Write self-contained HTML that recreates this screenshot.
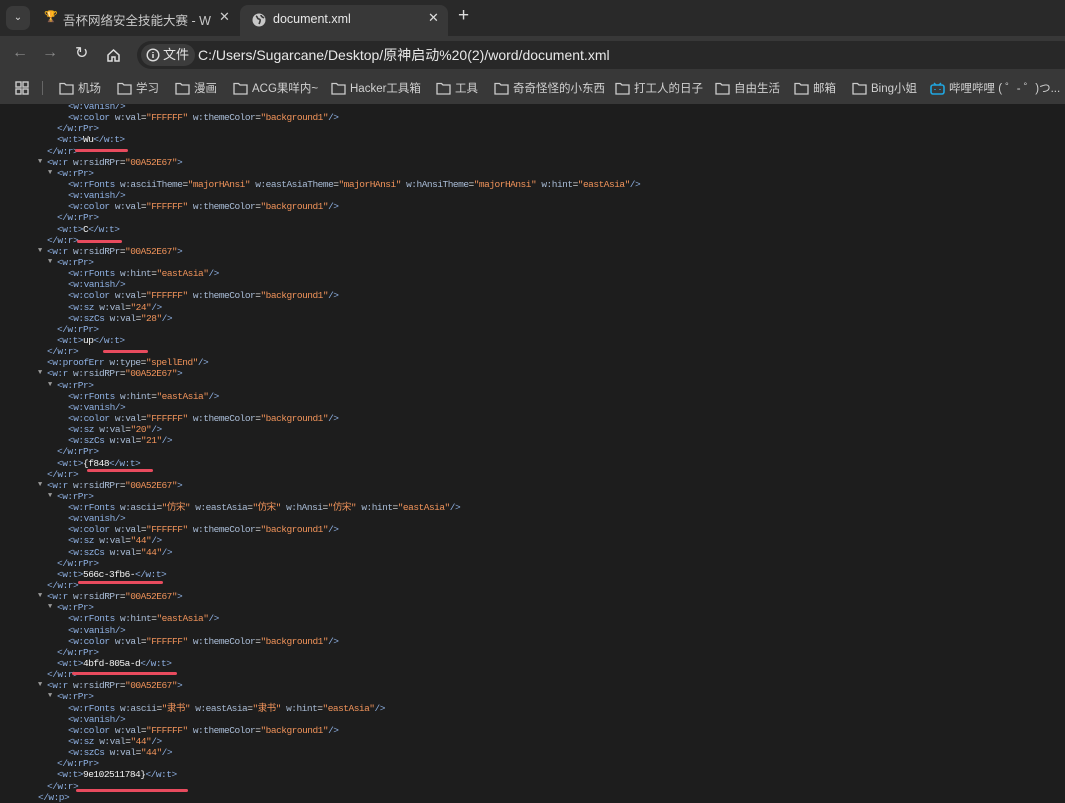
<!DOCTYPE html>
<html><head><meta charset="utf-8"><style>
*{margin:0;padding:0;box-sizing:border-box}
html,body{width:1065px;height:800px;overflow:hidden;background:#1d1d1d;font-family:"Liberation Sans","Noto Sans CJK SC",sans-serif}
.tabbar{position:absolute;left:0;top:0;width:1065px;height:36px;background:#292929;z-index:5}
.tool{position:absolute;left:0;top:36px;width:1065px;height:68px;background:#383838;z-index:5}
.tab{position:absolute;top:5px;height:31px;border-radius:8px 8px 0 0}
.omni{position:absolute;left:137px;top:5px;width:940px;height:28px;background:#282828;border-radius:14px}
.chip{position:absolute;left:4px;top:3px;width:54px;height:22px;background:#3c3c3c;border-radius:11px;color:#e3e3e3;font-size:13px;line-height:22px;padding-left:22px}
.url{position:absolute;left:61px;top:0;line-height:28px;color:#e8e8e8;font-size:14px;white-space:nowrap}
.bm{position:absolute;top:47px;color:#d0d0d0;font-size:11.5px;white-space:nowrap;line-height:12px}
.bm svg{position:absolute;left:-19px;top:-1px}
.code{position:absolute;left:0;top:101px;font-family:"Liberation Mono","Noto Sans CJK SC",monospace;font-size:9.5px;letter-spacing:-0.5px;line-height:11.15px;color:#e8e8e8;z-index:1}
.code div{height:11.15px;position:relative;white-space:pre}
.t{color:#8eb0e2}.n{color:#a9bcd6}.v{color:#f0935a}.x{color:#f4f4f4}
.a{position:absolute;margin-left:-9px;color:#9a9a9a;font-size:7px}
.u{position:absolute;height:3px;background:#e84b5e;border-radius:2px;z-index:2}
</style></head><body>
<div class="tabbar">
 <div style="position:absolute;left:6px;top:6px;width:24px;height:24px;background:#3a3a3a;border-radius:7px;color:#ddd;font-size:10px;text-align:center;line-height:24px">⌄</div>
 <div style="position:absolute;left:44px;top:11px;width:12px;height:12px;color:#e0b040;font-size:11px;line-height:12px">🏆</div>
 <div style="position:absolute;left:63px;top:10px;color:#c8c8c8;font-size:12.5px;white-space:nowrap;width:148px;overflow:hidden">吾杯网络安全技能大赛 - WuCup</div>
 <div style="position:absolute;left:219px;top:9px;color:#ccc;font-size:13px">✕</div>
 <div class="tab" style="left:240px;width:208px;background:#383838">
  <svg style="position:absolute;left:12px;top:8px" width="14" height="14" viewBox="0 0 14 14"><circle cx="7" cy="7" r="6.5" fill="#c8c8c8"/><path d="M4 3c2 1 1 3 3 3s1 3 0 5M9 2c0 2 2 2 3 3" stroke="#383838" stroke-width="1.6" fill="none"/></svg>
  <div style="position:absolute;left:33px;top:7px;color:#e8e8e8;font-size:12.5px">document.xml</div>
  <div style="position:absolute;left:188px;top:5px;color:#ddd;font-size:13px">✕</div>
 </div>
 <div style="position:absolute;left:458px;top:5px;color:#ddd;font-size:19px">+</div>
</div>
<div class="tool">
 <div style="position:absolute;left:12px;top:8px;color:#8a8a8a;font-size:16px">←</div>
 <div style="position:absolute;left:42px;top:8px;color:#8a8a8a;font-size:16px">→</div>
 <div style="position:absolute;left:75px;top:7px;color:#ddd;font-size:16px">↻</div>
 <svg style="position:absolute;left:106px;top:12px" width="15" height="15" viewBox="0 0 15 15"><path d="M2 7L7.5 2L13 7V13H9V9H6V13H2Z" stroke="#ddd" stroke-width="1.5" fill="none"/></svg>
 <div class="omni">
  <div class="chip"><svg style="position:absolute;left:5px;top:4px" width="14" height="14" viewBox="0 0 14 14"><circle cx="7" cy="7" r="5.8" stroke="#ddd" stroke-width="1.4" fill="none"/><path d="M7 6v4M7 4v1" stroke="#ddd" stroke-width="1.5"/></svg>文件</div>
  <div class="url">C:/Users/Sugarcane/Desktop/原神启动%20(2)/word/document.xml</div>
 </div>
 <svg style="position:absolute;left:15px;top:45px" width="14" height="14" viewBox="0 0 14 14"><g stroke="#ccc" stroke-width="1.4" fill="none"><rect x="1" y="1" width="5" height="5"/><rect x="8" y="1" width="5" height="5"/><rect x="1" y="8" width="5" height="5"/><rect x="8" y="8" width="5" height="5"/></g></svg>
 <div style="position:absolute;left:42px;top:45px;width:1px;height:14px;background:#666"></div>
</div>
<div style="position:absolute;left:0;top:36px;z-index:6">
<div class="bm" style="left:78px"><svg width="15" height="13" viewBox="0 0 15 13"><path d="M1 1.5H5.5L7 3H14V12H1Z" stroke="#ccc" stroke-width="1.3" fill="none"/></svg>机场</div>
<div class="bm" style="left:136px"><svg width="15" height="13" viewBox="0 0 15 13"><path d="M1 1.5H5.5L7 3H14V12H1Z" stroke="#ccc" stroke-width="1.3" fill="none"/></svg>学习</div>
<div class="bm" style="left:194px"><svg width="15" height="13" viewBox="0 0 15 13"><path d="M1 1.5H5.5L7 3H14V12H1Z" stroke="#ccc" stroke-width="1.3" fill="none"/></svg>漫画</div>
<div class="bm" style="left:252px"><svg width="15" height="13" viewBox="0 0 15 13"><path d="M1 1.5H5.5L7 3H14V12H1Z" stroke="#ccc" stroke-width="1.3" fill="none"/></svg>ACG果咩内~</div>
<div class="bm" style="left:350px"><svg width="15" height="13" viewBox="0 0 15 13"><path d="M1 1.5H5.5L7 3H14V12H1Z" stroke="#ccc" stroke-width="1.3" fill="none"/></svg>Hacker工具箱</div>
<div class="bm" style="left:455px"><svg width="15" height="13" viewBox="0 0 15 13"><path d="M1 1.5H5.5L7 3H14V12H1Z" stroke="#ccc" stroke-width="1.3" fill="none"/></svg>工具</div>
<div class="bm" style="left:513px"><svg width="15" height="13" viewBox="0 0 15 13"><path d="M1 1.5H5.5L7 3H14V12H1Z" stroke="#ccc" stroke-width="1.3" fill="none"/></svg>奇奇怪怪的小东西</div>
<div class="bm" style="left:634px"><svg width="15" height="13" viewBox="0 0 15 13"><path d="M1 1.5H5.5L7 3H14V12H1Z" stroke="#ccc" stroke-width="1.3" fill="none"/></svg>打工人的日子</div>
<div class="bm" style="left:734px"><svg width="15" height="13" viewBox="0 0 15 13"><path d="M1 1.5H5.5L7 3H14V12H1Z" stroke="#ccc" stroke-width="1.3" fill="none"/></svg>自由生活</div>
<div class="bm" style="left:813px"><svg width="15" height="13" viewBox="0 0 15 13"><path d="M1 1.5H5.5L7 3H14V12H1Z" stroke="#ccc" stroke-width="1.3" fill="none"/></svg>邮箱</div>
<div class="bm" style="left:871px"><svg width="15" height="13" viewBox="0 0 15 13"><path d="M1 1.5H5.5L7 3H14V12H1Z" stroke="#ccc" stroke-width="1.3" fill="none"/></svg>Bing小姐</div>
<div class="bm" style="left:949px"><svg width="15" height="13" viewBox="0 0 15 13"><rect x="1" y="3" width="13" height="9" rx="2" stroke="#20a6e0" stroke-width="1.6" fill="none"/><path d="M4 1L6 3M11 1L9 3M5 7V8M10 7V8" stroke="#20a6e0" stroke-width="1.4"/></svg>哔哩哔哩 ( ゜- ゜)つ...</div>
</div>

<div class="code"><div style="padding-left:68px"><span class="t">&lt;w:vanish/&gt;</span></div><div style="padding-left:68px"><span class="t">&lt;w:color</span> <span class="n">w:val</span>=<span class="v">"FFFFFF"</span> <span class="n">w:themeColor</span>=<span class="v">"background1"</span><span class="t">/&gt;</span></div><div style="padding-left:57px"><span class="t">&lt;/w:rPr&gt;</span></div><div style="padding-left:57px"><span class="t">&lt;w:t&gt;</span><span class="x">Wu</span><span class="t">&lt;/w:t&gt;</span></div><div style="padding-left:47px"><span class="t">&lt;/w:r&gt;</span></div><div style="padding-left:47px"><span class="a">▼</span><span class="t">&lt;w:r</span> <span class="n">w:rsidRPr</span>=<span class="v">"00A52E67"</span><span class="t">&gt;</span></div><div style="padding-left:57px"><span class="a">▼</span><span class="t">&lt;w:rPr&gt;</span></div><div style="padding-left:68px"><span class="t">&lt;w:rFonts</span> <span class="n">w:asciiTheme</span>=<span class="v">"majorHAnsi"</span> <span class="n">w:eastAsiaTheme</span>=<span class="v">"majorHAnsi"</span> <span class="n">w:hAnsiTheme</span>=<span class="v">"majorHAnsi"</span> <span class="n">w:hint</span>=<span class="v">"eastAsia"</span><span class="t">/&gt;</span></div><div style="padding-left:68px"><span class="t">&lt;w:vanish/&gt;</span></div><div style="padding-left:68px"><span class="t">&lt;w:color</span> <span class="n">w:val</span>=<span class="v">"FFFFFF"</span> <span class="n">w:themeColor</span>=<span class="v">"background1"</span><span class="t">/&gt;</span></div><div style="padding-left:57px"><span class="t">&lt;/w:rPr&gt;</span></div><div style="padding-left:57px"><span class="t">&lt;w:t&gt;</span><span class="x">C</span><span class="t">&lt;/w:t&gt;</span></div><div style="padding-left:47px"><span class="t">&lt;/w:r&gt;</span></div><div style="padding-left:47px"><span class="a">▼</span><span class="t">&lt;w:r</span> <span class="n">w:rsidRPr</span>=<span class="v">"00A52E67"</span><span class="t">&gt;</span></div><div style="padding-left:57px"><span class="a">▼</span><span class="t">&lt;w:rPr&gt;</span></div><div style="padding-left:68px"><span class="t">&lt;w:rFonts</span> <span class="n">w:hint</span>=<span class="v">"eastAsia"</span><span class="t">/&gt;</span></div><div style="padding-left:68px"><span class="t">&lt;w:vanish/&gt;</span></div><div style="padding-left:68px"><span class="t">&lt;w:color</span> <span class="n">w:val</span>=<span class="v">"FFFFFF"</span> <span class="n">w:themeColor</span>=<span class="v">"background1"</span><span class="t">/&gt;</span></div><div style="padding-left:68px"><span class="t">&lt;w:sz</span> <span class="n">w:val</span>=<span class="v">"24"</span><span class="t">/&gt;</span></div><div style="padding-left:68px"><span class="t">&lt;w:szCs</span> <span class="n">w:val</span>=<span class="v">"28"</span><span class="t">/&gt;</span></div><div style="padding-left:57px"><span class="t">&lt;/w:rPr&gt;</span></div><div style="padding-left:57px"><span class="t">&lt;w:t&gt;</span><span class="x">up</span><span class="t">&lt;/w:t&gt;</span></div><div style="padding-left:47px"><span class="t">&lt;/w:r&gt;</span></div><div style="padding-left:47px"><span class="t">&lt;w:proofErr</span> <span class="n">w:type</span>=<span class="v">"spellEnd"</span><span class="t">/&gt;</span></div><div style="padding-left:47px"><span class="a">▼</span><span class="t">&lt;w:r</span> <span class="n">w:rsidRPr</span>=<span class="v">"00A52E67"</span><span class="t">&gt;</span></div><div style="padding-left:57px"><span class="a">▼</span><span class="t">&lt;w:rPr&gt;</span></div><div style="padding-left:68px"><span class="t">&lt;w:rFonts</span> <span class="n">w:hint</span>=<span class="v">"eastAsia"</span><span class="t">/&gt;</span></div><div style="padding-left:68px"><span class="t">&lt;w:vanish/&gt;</span></div><div style="padding-left:68px"><span class="t">&lt;w:color</span> <span class="n">w:val</span>=<span class="v">"FFFFFF"</span> <span class="n">w:themeColor</span>=<span class="v">"background1"</span><span class="t">/&gt;</span></div><div style="padding-left:68px"><span class="t">&lt;w:sz</span> <span class="n">w:val</span>=<span class="v">"20"</span><span class="t">/&gt;</span></div><div style="padding-left:68px"><span class="t">&lt;w:szCs</span> <span class="n">w:val</span>=<span class="v">"21"</span><span class="t">/&gt;</span></div><div style="padding-left:57px"><span class="t">&lt;/w:rPr&gt;</span></div><div style="padding-left:57px"><span class="t">&lt;w:t&gt;</span><span class="x">{f848</span><span class="t">&lt;/w:t&gt;</span></div><div style="padding-left:47px"><span class="t">&lt;/w:r&gt;</span></div><div style="padding-left:47px"><span class="a">▼</span><span class="t">&lt;w:r</span> <span class="n">w:rsidRPr</span>=<span class="v">"00A52E67"</span><span class="t">&gt;</span></div><div style="padding-left:57px"><span class="a">▼</span><span class="t">&lt;w:rPr&gt;</span></div><div style="padding-left:68px"><span class="t">&lt;w:rFonts</span> <span class="n">w:ascii</span>=<span class="v">"仿宋"</span> <span class="n">w:eastAsia</span>=<span class="v">"仿宋"</span> <span class="n">w:hAnsi</span>=<span class="v">"仿宋"</span> <span class="n">w:hint</span>=<span class="v">"eastAsia"</span><span class="t">/&gt;</span></div><div style="padding-left:68px"><span class="t">&lt;w:vanish/&gt;</span></div><div style="padding-left:68px"><span class="t">&lt;w:color</span> <span class="n">w:val</span>=<span class="v">"FFFFFF"</span> <span class="n">w:themeColor</span>=<span class="v">"background1"</span><span class="t">/&gt;</span></div><div style="padding-left:68px"><span class="t">&lt;w:sz</span> <span class="n">w:val</span>=<span class="v">"44"</span><span class="t">/&gt;</span></div><div style="padding-left:68px"><span class="t">&lt;w:szCs</span> <span class="n">w:val</span>=<span class="v">"44"</span><span class="t">/&gt;</span></div><div style="padding-left:57px"><span class="t">&lt;/w:rPr&gt;</span></div><div style="padding-left:57px"><span class="t">&lt;w:t&gt;</span><span class="x">566c-3fb6-</span><span class="t">&lt;/w:t&gt;</span></div><div style="padding-left:47px"><span class="t">&lt;/w:r&gt;</span></div><div style="padding-left:47px"><span class="a">▼</span><span class="t">&lt;w:r</span> <span class="n">w:rsidRPr</span>=<span class="v">"00A52E67"</span><span class="t">&gt;</span></div><div style="padding-left:57px"><span class="a">▼</span><span class="t">&lt;w:rPr&gt;</span></div><div style="padding-left:68px"><span class="t">&lt;w:rFonts</span> <span class="n">w:hint</span>=<span class="v">"eastAsia"</span><span class="t">/&gt;</span></div><div style="padding-left:68px"><span class="t">&lt;w:vanish/&gt;</span></div><div style="padding-left:68px"><span class="t">&lt;w:color</span> <span class="n">w:val</span>=<span class="v">"FFFFFF"</span> <span class="n">w:themeColor</span>=<span class="v">"background1"</span><span class="t">/&gt;</span></div><div style="padding-left:57px"><span class="t">&lt;/w:rPr&gt;</span></div><div style="padding-left:57px"><span class="t">&lt;w:t&gt;</span><span class="x">4bfd-805a-d</span><span class="t">&lt;/w:t&gt;</span></div><div style="padding-left:47px"><span class="t">&lt;/w:r&gt;</span></div><div style="padding-left:47px"><span class="a">▼</span><span class="t">&lt;w:r</span> <span class="n">w:rsidRPr</span>=<span class="v">"00A52E67"</span><span class="t">&gt;</span></div><div style="padding-left:57px"><span class="a">▼</span><span class="t">&lt;w:rPr&gt;</span></div><div style="padding-left:68px"><span class="t">&lt;w:rFonts</span> <span class="n">w:ascii</span>=<span class="v">"隶书"</span> <span class="n">w:eastAsia</span>=<span class="v">"隶书"</span> <span class="n">w:hint</span>=<span class="v">"eastAsia"</span><span class="t">/&gt;</span></div><div style="padding-left:68px"><span class="t">&lt;w:vanish/&gt;</span></div><div style="padding-left:68px"><span class="t">&lt;w:color</span> <span class="n">w:val</span>=<span class="v">"FFFFFF"</span> <span class="n">w:themeColor</span>=<span class="v">"background1"</span><span class="t">/&gt;</span></div><div style="padding-left:68px"><span class="t">&lt;w:sz</span> <span class="n">w:val</span>=<span class="v">"44"</span><span class="t">/&gt;</span></div><div style="padding-left:68px"><span class="t">&lt;w:szCs</span> <span class="n">w:val</span>=<span class="v">"44"</span><span class="t">/&gt;</span></div><div style="padding-left:57px"><span class="t">&lt;/w:rPr&gt;</span></div><div style="padding-left:57px"><span class="t">&lt;w:t&gt;</span><span class="x">9e102511784}</span><span class="t">&lt;/w:t&gt;</span></div><div style="padding-left:47px"><span class="t">&lt;/w:r&gt;</span></div><div style="padding-left:38px"><span class="t">&lt;/w:p&gt;</span></div></div>

<div class="u" style="left:75px;top:149px;width:53px"></div>
<div class="u" style="left:77px;top:240px;width:45px"></div>
<div class="u" style="left:103px;top:350px;width:45px"></div>
<div class="u" style="left:87px;top:469px;width:66px"></div>
<div class="u" style="left:78px;top:581px;width:85px"></div>
<div class="u" style="left:72px;top:672px;width:105px"></div>
<div class="u" style="left:76px;top:789px;width:112px"></div>
</body></html>
